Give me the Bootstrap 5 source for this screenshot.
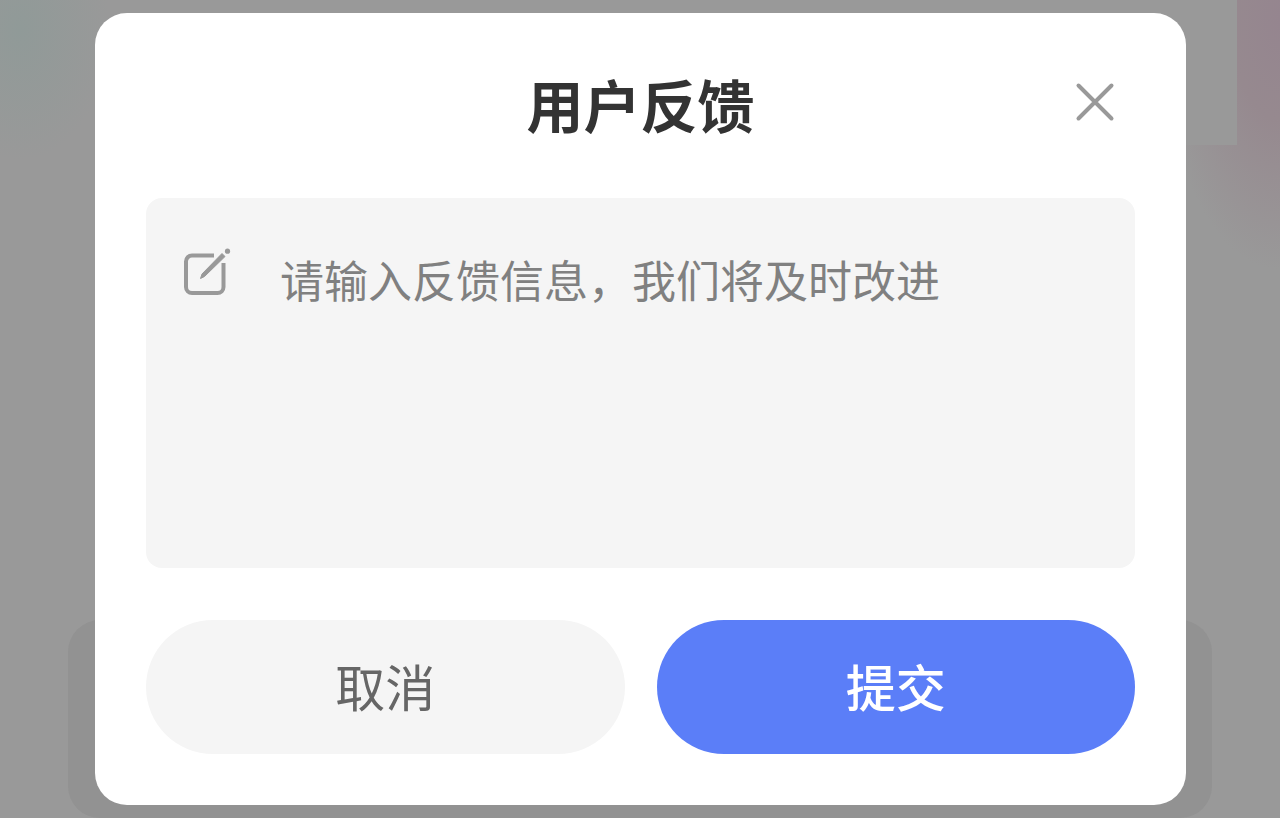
<!DOCTYPE html>
<html lang="zh-CN">
<head>
<meta charset="utf-8">
<meta name="viewport" content="width=device-width, initial-scale=1">
<title>用户反馈</title>
<link href="https://cdn.jsdelivr.net/npm/bootstrap@5.3.0/dist/css/bootstrap.min.css" rel="stylesheet">
<style>
  body {
    font-family: "Noto Sans CJK SC", sans-serif;
    background-color: #999;
  }
  .backdrop-page {
    padding: 13px 94px 13px 95px;
    background:
      linear-gradient(#999, #999) right 43px top 0 / 80px 145px no-repeat,
      radial-gradient(ellipse 120px 250px at 100% 20px, #95858f 0, #96898f 40%, rgba(153, 153, 153, 0) 100%),
      radial-gradient(ellipse 90px 130px at 20px 30px, #909a98 0, rgba(153, 153, 153, 0) 100%);
    background-color: #999;
  }
  .page-panel {
    left: 68px;
    right: 68px;
    bottom: 0;
    height: 198px;
    border-radius: 32px;
    background: #929292;
  }
  .feedback-dialog { border-radius: 32px; padding: 0 51px 51px; }
  .dialog-head { height: 185px; padding-bottom: 6px; }
  .dialog-title { font-size: 57px; line-height: 80px; color: #333; font-weight: 700; }
  .dismiss { right: 15px; top: 64px; width: 50px; height: 50px; }
  .message-box {
    min-height: 370px;
    padding: 48px 40px 24px 37px;
    gap: 47px;
    border-radius: 16px;
    background: #f5f5f5;
  }
  .message-box label { padding-top: 2px; }
  .message-box textarea {
    resize: none;
    outline: 0;
    font-size: 44px;
    line-height: 66px;
    color: #333;
  }
  .message-box textarea::placeholder { color: #808080; opacity: 1; }
  .dialog-actions { gap: 32px; margin-top: 52px; }
  .dialog-actions .btn {
    height: 134px;
    padding: 0 12px 4px;
    font-size: 50px;
    line-height: 72px;
    --bs-btn-border-width: 0;
  }
  .btn-cancel {
    --bs-btn-color: #666; --bs-btn-bg: #f5f5f5;
    --bs-btn-hover-color: #666; --bs-btn-hover-bg: #ececec;
  }
  .btn-submit {
    --bs-btn-color: #fff; --bs-btn-bg: #5b7ef8;
    --bs-btn-hover-color: #fff; --bs-btn-hover-bg: #4c70ee;
    --bs-btn-font-weight: 500;
  }
</style>
</head>
<body>
<div class="backdrop-page position-relative min-vh-100">
  <div class="page-panel position-absolute"></div>
  <main class="feedback-dialog bg-white position-relative" role="dialog" aria-modal="true" aria-labelledby="dialogTitle">
    <form>
      <header class="dialog-head d-flex align-items-center justify-content-center position-relative">
        <h1 class="dialog-title mb-0" id="dialogTitle">用户反馈</h1>
        <button type="button" class="dismiss btn border-0 p-0 position-absolute d-flex" aria-label="关闭">
          <svg width="50" height="50" viewBox="0 0 50 50" fill="none" stroke="#999" stroke-width="4" stroke-linecap="round"><path d="M8.500 8.500 41.500 41.500M41.500 8.500 8.500 41.500"/></svg>
        </button>
      </header>
      <div class="message-box d-flex align-items-stretch">
        <label for="message" class="flex-shrink-0" aria-label="反馈信息">
          <svg class="d-block" width="50" height="50" viewBox="0 0 50 50" fill="none" stroke="#999" stroke-width="4">
            <path d="M31 7.500H9a6 6 0 0 0-6 6V39a6 6 0 0 0 6 6h25.500a6 6 0 0 0 6-6V15"/>
            <path d="M39 5.500 42 8.500 21.500 28.500 17.500 30.500 19 26Z" fill="#999" stroke="#999" stroke-width="1"/>
            <circle cx="44.500" cy="3.200" r="2.600" fill="#999" stroke="none"/>
          </svg>
        </label>
        <textarea id="message" class="flex-grow-1 border-0 bg-transparent p-0 overflow-hidden" placeholder="请输入反馈信息，我们将及时改进"></textarea>
      </div>
      <div class="dialog-actions d-flex">
        <button type="button" class="btn btn-cancel rounded-pill w-100">取消</button>
        <button type="submit" class="btn btn-submit rounded-pill w-100">提交</button>
      </div>
    </form>
  </main>
</div>
<script src="https://cdn.jsdelivr.net/npm/bootstrap@5.3.0/dist/js/bootstrap.bundle.min.js"></script>
</body>
</html>
